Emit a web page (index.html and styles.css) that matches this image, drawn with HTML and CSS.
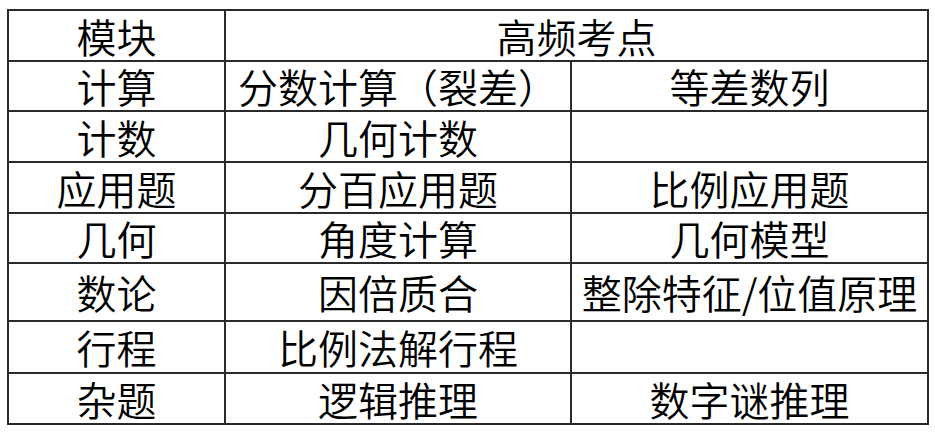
FILE: index.html
```html
<!DOCTYPE html>
<html lang="zh">
<head>
<meta charset="utf-8">
<link rel="stylesheet" href="styles.css">
</head>
<body>
<table class="grid">
  <colgroup><col class="c1"><col class="c2"><col class="c3"></colgroup>
  <tr class="r1"><td>模块</td><td colspan="2">高频考点</td></tr>
  <tr class="r2"><td>计算</td><td>分数计算（裂差）</td><td>等差数列</td></tr>
  <tr class="r3"><td>计数</td><td>几何计数</td><td></td></tr>
  <tr class="r4"><td>应用题</td><td>分百应用题</td><td>比例应用题</td></tr>
  <tr class="r5"><td>几何</td><td>角度计算</td><td>几何模型</td></tr>
  <tr class="r6"><td>数论</td><td>因倍质合</td><td>整除特征/位值原理</td></tr>
  <tr class="r7"><td>行程</td><td>比例法解行程</td><td></td></tr>
  <tr class="r8"><td>杂题</td><td>逻辑推理</td><td>数字谜推理</td></tr>
</table>
</body>
</html>
```
FILE: styles.css
```css
html, body {
  margin: 0;
  padding: 0;
  background: #ffffff;
}
body {
  padding: 9px 0 0 7px;
  font-family: "Noto Sans CJK SC", "Noto Sans", sans-serif;
  font-weight: 350;
  color: #000;
}
.grid {
  border-collapse: collapse;
  table-layout: fixed;
  width: 920px;
}
.c1 { width: 217px; }
.c2 { width: 346px; }
.c3 { width: 357px; }
.grid td {
  border: 2px solid #2a2a2a;
  padding: 0;
  text-align: center;
  vertical-align: middle;
  font-size: 40px;
  line-height: 1;
  white-space: nowrap;
}
.r1 { height: 51px; }
.r2 { height: 50px; }
.r3 { height: 51px; }
.r4 { height: 51px; }
.r5 { height: 50px; }
.r6 { height: 58px; }
.r7 { height: 52px; }
.r8 { height: 51px; }
```
